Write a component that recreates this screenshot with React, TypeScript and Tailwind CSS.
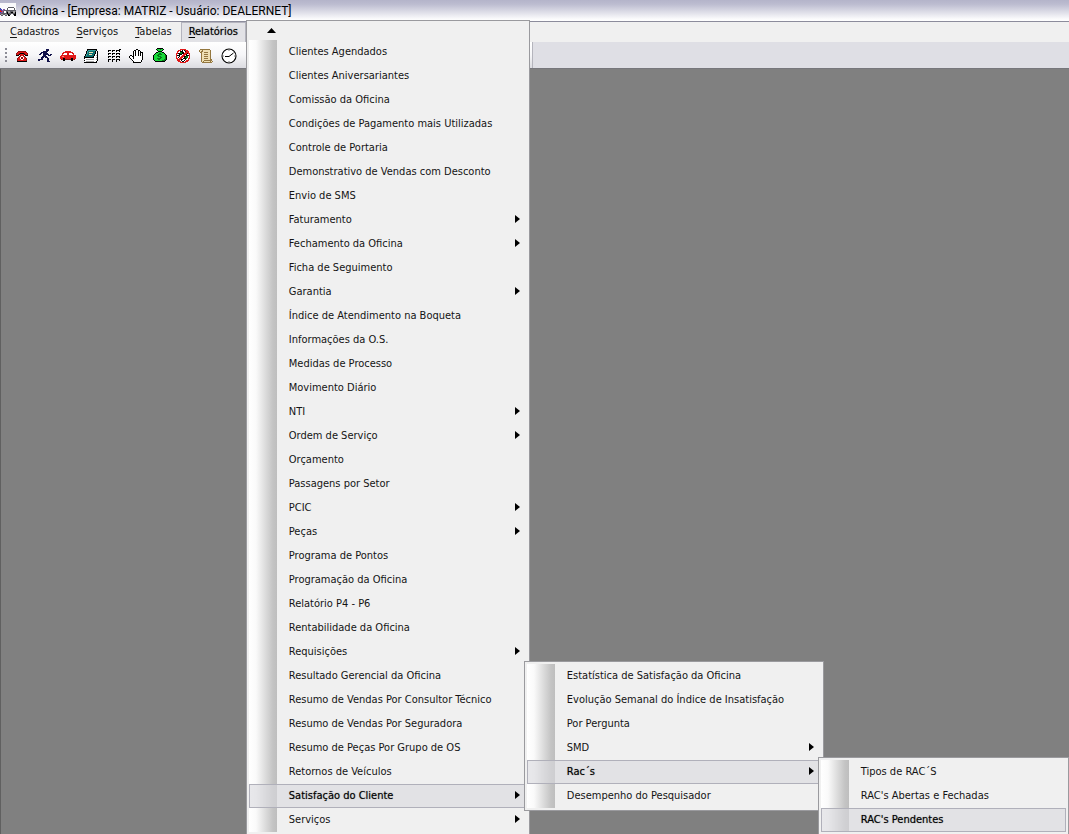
import type { ReactNode } from "react";

type Entry = {
  label: string;
  active?: boolean;
  submenu?: boolean;
  panel?: ReactNode;
};

const palette: Record<string, string> = {
  k: "#000000",
  n: "#10104a",
  r: "#e01818",
  d: "#8c1010",
  R: "#ff8a7a",
  w: "#ffffff",
  t: "#0f7070",
  T: "#39a0a0",
  g: "#18d838",
  G: "#067a18",
  y: "#efe0b4",
  b: "#94773f",
  s: "#a4a4a4",
  p: "#8a5a9c",
  u: "#3c46b4",
  m: "#5c5c64",
};

function Pixels({ rows }: { rows: string[] }) {
  return (
    <svg width="16" height="16" viewBox="0 0 16 16" shapeRendering="crispEdges" aria-hidden="true">
      {rows.flatMap((row, y) =>
        [...row].map((c, x) =>
          palette[c] ? <rect key={`${x}-${y}`} x={x} y={y} width="1" height="1" fill={palette[c]} /> : null,
        ),
      )}
    </svg>
  );
}

const phone = [
  "................",
  "................",
  "................",
  "....dddddddd....",
  "...drrrrrrrrd...",
  "..drrdkkkkdrrd..",
  "..drdkrrrrkdrd..",
  "..kkk.drrd.kkk..",
  ".....drwwrd.....",
  "....drwddwrd....",
  "...drrwddwrrd...",
  "...drrrwwrrrd...",
  "...drrrrrrrrd...",
  "...kkkkkkkkkk...",
];

const runner = [
  "................",
  ".........nnn....",
  ".........nnn....",
  "......nnnnn.....",
  "....nnnnnn......",
  "...nn.nnnnn.....",
  "..nn..nnnnnn.nn.",
  "......nnn..nnn..",
  ".....nnnnn......",
  "....nnn.nnn.....",
  "....nn....nn....",
  ".nnnnn....nn....",
  ".nn.......nn....",
  "..........nnn...",
];

const car = [
  "................",
  "................",
  "................",
  ".....rrrrrr.....",
  "...rrrrrrrrrr...",
  "..rrwwwrrwwwrr..",
  "..rwwwwrrwwwwr..",
  ".rrrrrrrrrrrrrrr",
  "rrRRrrrrrrrrrrrr",
  "rrrrrrrrrrrrrrrr",
  "rrrkkrrrrrrkkrrr",
  ".drkkddddddkkrd.",
  "...kk......kk...",
];

const notebook = [
  "................",
  "....kkkkkkkkkk..",
  "....kTTTTTTTTk..",
  "...kTtttttttkwk.",
  "...kTtyyyyttkwk.",
  "...kTtttttttkwk.",
  "..kTttyyyttkwwk.",
  "..kTtttttttkwsk.",
  ".kttttttttkwwwk.",
  ".kkkkkkkkkkwwsk.",
  ".kwwwwwwwwwwwwk.",
  "..wsssssssswwsk.",
  ".kwwwwwwwwwwwwk.",
  "..wsssssssswwk..",
  ".kkkkkkkkkkkkk..",
];

const matrix = [
  "................",
  ".............kk.",
  "..kkk.kkk.kkkk..",
  "..k...k...k..k..",
  "................",
  "..kkk.kkk.kkkk..",
  "..k...k...k..k..",
  "................",
  "..kkk.kkk.kkkk..",
  "..k...k...k..k..",
  "................",
  "..kkk.kkk.kkkk..",
  "..k...k...k..k..",
  "..k...k...k.....",
];

const hand = [
  "................",
  ".......kk.......",
  ".....kkwwkk.....",
  "....kwkwwkwk....",
  "....kwkwwkwkkk..",
  "....kwkwwkwkwk..",
  "....kwkwwkwkwk..",
  ".kk.kwkwwkwkwk..",
  "kwwkkwwwwwwwwk..",
  "kwwwkwwwwwwwwk..",
  ".kwwkwwwwwwwwk..",
  "..kwwwwwwwwwwk..",
  "...kwwwwwwwwk...",
  "....kwwwwwwwk...",
  "....kkkkkkkk....",
];

const money = [
  ".....kkkkkk.....",
  "....kgggGggk....",
  ".....kggggk.....",
  "......kkkk......",
  "....kkggggkk....",
  "...kgggGGgggk...",
  "..kgggGGGGgggk..",
  ".kgggGGggggggGk.",
  ".kggggGGGggggGk.",
  ".kggggggGGgggGk.",
  ".kgggGGGGggggGk.",
  ".kggggGGggggGGk.",
  "..kgggggggGGGk..",
  "...kkkkkkkkkk...",
];

const blocked = [
  "................",
  ".....rrrrrr.....",
  "...rrrwkwkrrr...",
  "..rrwkkkwwkrrr..",
  "..rwwGGkkwrrrr..",
  ".rrkkGGkkrrrkrr.",
  ".rwwkkkwrrrkwwr.",
  ".rkkkwwrrrwkkkr.",
  ".rwwkwrrrkkGGwr.",
  ".rwkwrrrwkGGGwr.",
  ".rrwrrrwkkkGwrr.",
  "..rrrrkkwwkwwr..",
  "..rrrwkwwkwrrr..",
  "...rrrwkkwrrr...",
  ".....rrrrrr.....",
];

const scroll = [
  "................",
  "..bbbbbbbbbb....",
  ".byybyyyyyyyb...",
  ".bybbyyyyyyyb...",
  "..bbyybbbbyyb...",
  "...byyyyyyyyb...",
  "...byybbbbyyb...",
  "...byyyyyyyyb...",
  "...byybbbbyyb...",
  "...byyyyyyyyb...",
  "...byybbbbyyb...",
  "...byyyyyyyybb..",
  "...byybbbbbbbb..",
  "...bybyyyyyybyb.",
  "....bbbbbbbbbb..",
];

const appCars = [
  "................",
  "................",
  "................",
  "................",
  "........mmmmmm..",
  "u......mwwwwwwm.",
  "uu.pp..mwwwwwwm.",
  "ruppmmmmmmmmmmmm",
  "rrpmwwmmssmmmssm",
  "uppmwwmkssmkkssk",
  "pmmmmmmkmmmmmmmk",
  "mssmmssmkmm..mkk",
  ".mm..mm.kk....kk",
];

function Clock() {
  return (
    <svg width="16" height="16" viewBox="0 0 16 16" aria-hidden="true">
      <circle cx="8" cy="8" r="7" fill="#fff" stroke="#000" strokeWidth="1.1" />
      <path d="M12.500 5 8 8.500H4" fill="none" stroke="#000" strokeWidth="1" />
      <path d="M8 2v1M8 13v1M2 8h1M13 8h1" stroke="#777" strokeWidth="1" />
    </svg>
  );
}

const tools: { name: string; icon: ReactNode }[] = [
  { name: "Telefone", icon: <Pixels rows={phone} /> },
  { name: "Atendimento", icon: <Pixels rows={runner} /> },
  { name: "Veículos", icon: <Pixels rows={car} /> },
  { name: "Agenda", icon: <Pixels rows={notebook} /> },
  { name: "Quadro", icon: <Pixels rows={matrix} /> },
  { name: "Parar", icon: <Pixels rows={hand} /> },
  { name: "Pagamento", icon: <Pixels rows={money} /> },
  { name: "Bloqueio", icon: <Pixels rows={blocked} /> },
  { name: "Relatório", icon: <Pixels rows={scroll} /> },
  { name: "Relógio", icon: <Clock /> },
];

function MenuRow({ label, active, submenu, panel }: Entry) {
  return (
    <li className="relative" role="none">
      <button
        type="button"
        role="menuitem"
        aria-haspopup={submenu ? "menu" : undefined}
        className={
          "flex h-6 w-full items-center justify-between border pr-[6px] pl-[39px] text-left whitespace-nowrap " +
          (active
            ? "border-[#b0b0ba] bg-[#d8d8de]/60 text-black [text-shadow:0_0_1px_#00000080]"
            : "border-transparent text-[#141414]")
        }
      >
        <span>{label}</span>
        {submenu && (
          <svg width="5" height="8" viewBox="0 0 5 8" className="mb-[2px]" aria-hidden="true">
            <path d="M0 0v8l5-4z" fill="#000" />
          </svg>
        )}
      </button>
      {panel}
    </li>
  );
}

function MenuList({ items, label }: { items: Entry[]; label: string }) {
  return (
    <ul
      role="menu"
      aria-label={label}
      className="bg-[linear-gradient(to_right,#fff_0%,#fafafa_25%,#c4c4c4_85%,#bebebe_100%)] bg-[length:28px_100%] bg-no-repeat"
    >
      {items.map((item) => (
        <MenuRow key={item.label} {...item} />
      ))}
    </ul>
  );
}

const racs: Entry[] = [
  { label: "Tipos de RAC´S" },
  { label: "RAC's Abertas e Fechadas" },
  { label: "RAC's Pendentes", active: true },
];

const satisfaction: Entry[] = [
  { label: "Estatística de Satisfação da Oficina" },
  { label: "Evolução Semanal do Índice de Insatisfação" },
  { label: "Por Pergunta" },
  { label: "SMD", submenu: true },
  {
    label: "Rac´s",
    submenu: true,
    active: true,
    panel: (
      <div className="absolute -top-[3px] left-[291px] z-30 w-[251px] border border-[#9a9a9e] bg-[#f0f0f0] p-[2px] pb-6">
        <MenuList items={racs} label="Rac´s" />
      </div>
    ),
  },
  { label: "Desempenho do Pesquisador" },
];

const reports: Entry[] = [
  { label: "Clientes Agendados" },
  { label: "Clientes Aniversariantes" },
  { label: "Comissão da Oficina" },
  { label: "Condições de Pagamento mais Utilizadas" },
  { label: "Controle de Portaria" },
  { label: "Demonstrativo de Vendas com Desconto" },
  { label: "Envio de SMS" },
  { label: "Faturamento", submenu: true },
  { label: "Fechamento da Oficina", submenu: true },
  { label: "Ficha de Seguimento" },
  { label: "Garantia", submenu: true },
  { label: "Índice de Atendimento na Boqueta" },
  { label: "Informações da O.S." },
  { label: "Medidas de Processo" },
  { label: "Movimento Diário" },
  { label: "NTI", submenu: true },
  { label: "Ordem de Serviço", submenu: true },
  { label: "Orçamento" },
  { label: "Passagens por Setor" },
  { label: "PCIC", submenu: true },
  { label: "Peças", submenu: true },
  { label: "Programa de Pontos" },
  { label: "Programação da Oficina" },
  { label: "Relatório P4 - P6" },
  { label: "Rentabilidade da Oficina" },
  { label: "Requisições", submenu: true },
  { label: "Resultado Gerencial da Oficina" },
  { label: "Resumo de Vendas Por Consultor Técnico" },
  { label: "Resumo de Vendas Por Seguradora" },
  { label: "Resumo de Peças Por Grupo de OS" },
  { label: "Retornos de Veículos" },
  {
    label: "Satisfação do Cliente",
    submenu: true,
    active: true,
    panel: (
      <div className="absolute -bottom-[3px] left-[275px] z-20 w-[300px] border border-[#9a9a9e] bg-[#f0f0f0] p-[2px]">
        <MenuList items={satisfaction} label="Satisfação do Cliente" />
      </div>
    ),
  },
  { label: "Serviços", submenu: true },
];

function BarItem({ first, rest }: { first: string; rest: string }) {
  return (
    <button type="button" className="h-5 px-2 text-[#141414]">
      <u className="underline-offset-2">{first}</u>
      {rest}
    </button>
  );
}

export default function App() {
  return (
    <div className="flex h-screen flex-col overflow-hidden bg-[#808080] font-['DejaVu_Sans_Condensed','Noto_Sans',sans-serif] text-[11px] leading-4">
      <header className="flex h-[21px] shrink-0 items-center gap-[5px] bg-[linear-gradient(to_bottom,#b4b4ca_0%,#bcbcd0_20%,#fafafc_90%,#fff_100%)] font-['Roboto','Noto_Sans',sans-serif] text-xs text-black">
        <span className="bg-white/90">
          <Pixels rows={appCars} />
        </span>
        <h1>Oficina - [Empresa: MATRIZ - Usuário: DEALERNET]</h1>
      </header>

      <nav className="flex h-[21px] shrink-0 gap-px border-t border-[#8c8c9c] bg-[#f0f0f0] pl-[2px]" aria-label="Menu principal">
        <BarItem first="C" rest="adastros" />
        <BarItem first="S" rest="erviços" />
        <BarItem first="T" rest="abelas" />
        <div className="relative">
          <button
            type="button"
            aria-haspopup="menu"
            aria-expanded="true"
            className="h-5 w-[65px] border border-b-0 border-[#b4b4be] bg-[#e2e2e6] pb-px text-black [text-shadow:0_0_1px_#00000080]"
          >
            <u className="underline-offset-2">R</u>elatórios
          </button>
          <div className="absolute -top-[2px] left-full z-10 w-[284px] border border-[#9a9a9e] bg-[#f0f0f0] p-[2px] pb-6">
            <button type="button" aria-label="Rolar para cima" className="flex h-[17px] w-full items-start pt-[5px] pl-[18px]">
              <svg width="9" height="5" viewBox="0 0 9 5" aria-hidden="true">
                <path d="M0 5h9L4.500 0z" fill="#000" />
              </svg>
            </button>
            <MenuList items={reports} label="Relatórios" />
          </div>
        </div>
      </nav>

      <div className="flex h-[27px] shrink-0 border-b border-[#77777c] bg-[#dfdfe5]">
        <div
          role="toolbar"
          aria-label="Ferramentas"
          className="flex w-[533px] items-center border-r border-[#b4b4bc] bg-[linear-gradient(to_bottom,#fff_0%,#f6f6f8_50%,#dcdce1_100%)] pt-[2px] pl-[5px]"
        >
          <svg width="2" height="18" viewBox="0 0 2 18" shapeRendering="crispEdges" className="mr-[3px]" aria-hidden="true">
            <path d="M0 1h2v2H0zM0 5h2v2H0zM0 9h2v2H0zM0 13h2v2H0z" fill="#8c8c96" />
          </svg>
          {tools.map((tool) => (
            <button key={tool.name} type="button" aria-label={tool.name} className="flex w-[23px] justify-center">
              {tool.icon}
            </button>
          ))}
        </div>
      </div>

      <main className="grow border-l border-[#606060]" aria-label="Área de trabalho" />
    </div>
  );
}
